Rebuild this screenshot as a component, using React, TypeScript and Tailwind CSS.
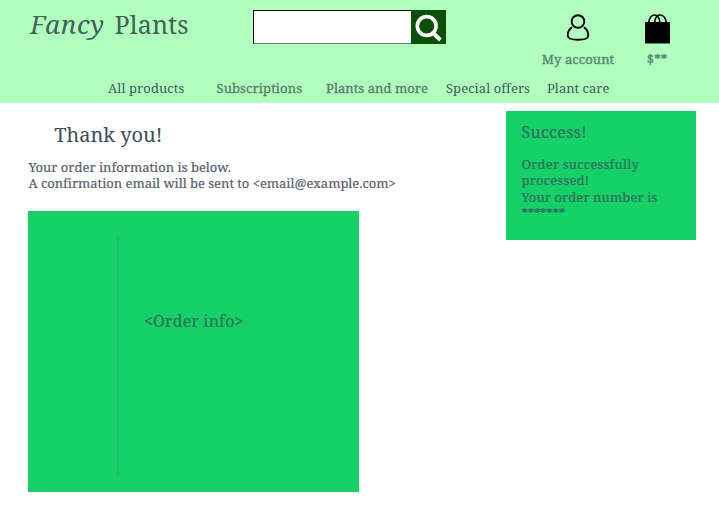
import React from "react";

const navItems = [
  { label: "All products", style: "ml-[108px] w-[108.5px] tracking-[0.1px] text-[#3f5a55]" },
  { label: "Subscriptions", style: "w-[109.5px] tracking-[0.1px] text-[#567c69] [-webkit-text-stroke:0.3px]" },
  { label: "Plants and more", style: "w-[120px] tracking-[0.04px] text-[#567c69] [-webkit-text-stroke:0.3px]" },
  { label: "Special offers", style: "w-[101px] tracking-[0.05px] text-[#3f5a55]" },
  { label: "Plant care", style: "text-[#3f5a55]" },
];

function SearchBar() {
  return (
    <div className="ml-[253px] mt-[10px] flex h-[34px] w-[193px]">
      <div className="h-[34px] w-[158px] border border-r-0 border-black border-b-[#777] bg-white" />
      <button className="h-[34px] w-[35px] bg-[#0b4f0b]" aria-label="Search">
        <svg width="35" height="34" viewBox="0 0 35 34" fill="none" stroke="white">
          <circle cx="15.7" cy="16" r="9.4" strokeWidth="3.6" />
          <path d="M22 23L29.5 30" strokeWidth="4" />
        </svg>
      </button>
    </div>
  );
}

function Header() {
  return (
    <header className="flex h-[103px] flex-col bg-[#b0ffbe]">
      <div className="flex h-[77px]">
        <h1 className="-mr-[189px] flex w-[189px] shrink-0 pl-[30px] pt-[8px] text-[25px] leading-[32px] text-[#446057]">
          <em className="w-[84.5px] text-[26px] tracking-[0.65px]">Fancy</em>
          <span className="tracking-[0.2px]">Plants</span>
        </h1>
        <SearchBar />
        <div className="ml-[92px] flex w-[80px] flex-col items-center pt-[13px]">
          <svg width="24" height="29" viewBox="0 0 24 29" fill="none" stroke="black" strokeWidth="1.9">
            <circle cx="12" cy="8.5" r="6.3" />
            <path d="M6 14.2C2.8 16.5 1.5 20 1.8 23C2.1 26 6 26.8 12 26.8S21.9 26 22.2 23C22.5 20 21.2 16.5 18 14.2" />
          </svg>
          <span className="mt-[8.5px] whitespace-nowrap text-[13px] leading-[16px] tracking-[0.08px] text-[#5b8772] [-webkit-text-stroke:0.4px]">My account</span>
        </div>
        <div className="ml-[19px] flex w-[40px] flex-col items-center pt-[13px]">
          <svg className="translate-x-[0.5px]" width="26" height="31" viewBox="0 0 26 31">
            <path d="M0.5 9H25.5V30.5H0.5Z" fill="black" />
            <path d="M4 10C5 4 7 2 10 2S15 5 15.5 10M10 10C10.5 5 12 2 15.5 2S21 4 22 10" fill="none" stroke="black" strokeWidth="1.6" />
          </svg>
          <span className="mt-[6.5px] text-[13px] leading-[16px] text-[#5b8772] [-webkit-text-stroke:0.4px]">$**</span>
        </div>
      </div>
      <nav className="flex whitespace-nowrap pt-[3px] text-[13px] leading-[16px]">
        {navItems.map((item) => (
          <a key={item.label} className={item.style}>{item.label}</a>
        ))}
      </nav>
    </header>
  );
}

export default function App() {
  return (
    <div className="h-[512px] w-[719px] overflow-hidden bg-white font-['Noto_Serif','DejaVu_Serif_Condensed','DejaVu_Serif',serif] [font-stretch:condensed]">
      <Header />
      <main className="flex">
        <section className="ml-[28.4px] w-[477.6px] whitespace-nowrap">
          <h2 className="ml-[25.8px] mt-[19px] text-[20px] leading-[26px] text-[#414d5b]">Thank you!</h2>
          <div className="mt-[11px] text-[13px] leading-[16px] text-[#59616b] [-webkit-text-stroke:0.2px]">
            <p>Your order information is below.</p>
            <p className="tracking-[-0.03px]">A confirmation email will be sent to &lt;email@example.com&gt;</p>
          </div>
          <div className="mt-[20px] flex h-[281px] w-[330.5px] bg-[#16d068]">
            <div className="ml-[89px] mt-[25px] h-[240px] w-[2px] bg-[#25b87b]" />
            <span className="ml-[24.5px] mt-[99px] text-[16px] leading-[22px] tracking-[0.15px] text-[#2f6e5a] [-webkit-text-stroke:0.15px]">&lt;Order info&gt;</span>
          </div>
        </section>
        <aside className="mt-[8px] h-[129px] w-[190px] whitespace-nowrap bg-[#16d068] pl-[15.5px] pt-[10px] text-[#2f6e5a] [-webkit-text-stroke:0.2px]">
          <h3 className="text-[16px] leading-[22px] tracking-[0.3px]">Success!</h3>
          <div className="mt-[13px] text-[13px] leading-[16.3px] tracking-[0.18px]">
            <p>Order successfully</p>
            <p>processed!</p>
            <p className="tracking-[0.1px]">Your order number is</p>
            <p className="tracking-[-0.3px]">*******</p>
          </div>
        </aside>
      </main>
    </div>
  );
}
